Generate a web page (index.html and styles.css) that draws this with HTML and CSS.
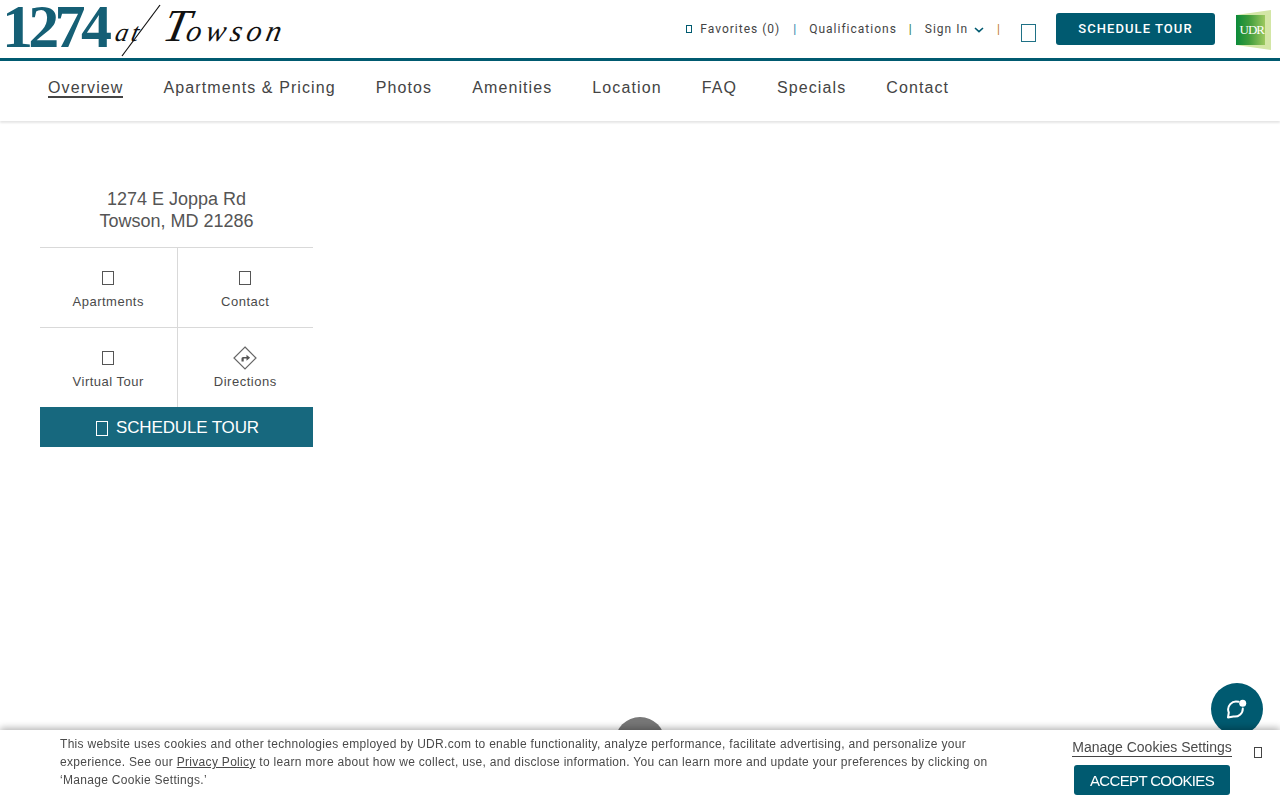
FILE: index.html
```html
<!DOCTYPE html>
<html lang="en">
<head>
<meta charset="utf-8">
<title>1274 at Towson</title>
<link rel="stylesheet" href="styles.css">
</head>
<body>
<header class="top">
  <a class="logo" href="#"><span class="logo-num">1274</span><span class="logo-script"><span class="logo-at">at</span> <span class="logo-t">T</span>owson</span>
    <svg class="logo-flourish" width="60" height="58" viewBox="0 0 60 58"><path d="M4 56 L42 5" fill="none" stroke="#111" stroke-width="1.2"/></svg>
  </a>
  <div class="util">
    <a class="util-link" href="#"><i class="tofu tofu-xs"></i>Favorites (0)</a>
    <span class="sep sep-a">|</span>
    <a class="util-link" href="#">Qualifications</a>
    <span class="sep sep-b">|</span>
    <a class="util-link" href="#">Sign In<svg class="chev" width="10" height="6" viewBox="0 0 10 6"><path d="M1 1l4 3.6L9 1" fill="none" stroke="#005a70" stroke-width="1.6"/></svg></a>
    <span class="sep sep-c">|</span>
    <i class="tofu tofu-lg"></i>
    <a class="tour-btn" href="#">SCHEDULE TOUR</a>
    <svg class="udr" width="36" height="40" viewBox="0 0 36 40">
      <defs><linearGradient id="g" x1="0" x2="1" y1="0" y2="0"><stop offset="0" stop-color="#0b8a3a"/><stop offset=".45" stop-color="#3f9c3c"/><stop offset="1" stop-color="#9cc85f"/></linearGradient></defs>
      <path d="M0 5 L35 0 V40 L0 35Z" fill="#d3e6a6"/>
      <path d="M0 5 L29 5 V35 L0 35Z" fill="url(#g)"/>
      <text x="3.5" y="24" class="udr-text">UDR</text>
    </svg>
  </div>
</header>
<nav class="nav">
  <a class="nav-item active" href="#">Overview</a>
  <a class="nav-item" href="#">Apartments &amp; Pricing</a>
  <a class="nav-item" href="#">Photos</a>
  <a class="nav-item" href="#">Amenities</a>
  <a class="nav-item" href="#">Location</a>
  <a class="nav-item" href="#">FAQ</a>
  <a class="nav-item" href="#">Specials</a>
  <a class="nav-item" href="#">Contact</a>
</nav>
<main class="main">
  <aside class="card">
    <address class="addr">1274 E Joppa Rd<br>Towson, MD 21286</address>
    <div class="grid">
      <a class="cell" href="#"><span class="cell-icon"><i class="tofu tofu-md"></i></span>Apartments</a>
      <a class="cell" href="#"><span class="cell-icon"><i class="tofu tofu-md"></i></span>Contact</a>
      <a class="cell" href="#"><span class="cell-icon"><i class="tofu tofu-md"></i></span>Virtual Tour</a>
      <a class="cell" href="#"><span class="cell-icon"><svg width="24" height="24" viewBox="0 0 24 24"><path d="M12 1 L23 12 L12 23 L1 12Z" fill="none" stroke="#666" stroke-width="1.2"/><path d="M8.5 15.5v-3a1.6 1.6 0 0 1 1.6-1.6h3.4V8.7l3.6 3-3.6 3v-2.1h-2.8v2.9z" fill="#555"/></svg></span>Directions</a>
    </div>
    <a class="cta" href="#"><i class="tofu tofu-cta"></i>SCHEDULE TOUR</a>
  </aside>
</main>
<div class="spinner"></div>
<a class="chat" href="#"><svg width="22" height="22" viewBox="0 0 22 22"><path d="M12.5 3.8A8 8 0 0 0 2.8 14.5L2 19.5l5.5-1A8 8 0 0 0 16.8 10.5" fill="none" stroke="#fff" stroke-width="2" stroke-linecap="round" stroke-linejoin="round"/><circle cx="16.7" cy="5.3" r="3.5" fill="#fff"/></svg></a>
<section class="cookie">
  <p class="cookie-text">This website uses cookies and other technologies employed by UDR.com to enable functionality, analyze performance, facilitate advertising, and personalize your experience. See our <a href="#">Privacy Policy</a> to learn more about how we collect, use, and disclose information. You can learn more and update your preferences by clicking on ‘Manage Cookie Settings.’</p>
  <div class="cookie-actions">
    <a class="manage" href="#">Manage Cookies Settings</a>
    <a class="accept" href="#">ACCEPT COOKIES</a>
  </div>
  <i class="tofu tofu-close"></i>
</section>
</body>
</html>
```

FILE: styles.css
```css
* { box-sizing: border-box; }
html, body { margin: 0; height: 100%; overflow: hidden; }
body { background: #fff; font-family: "Liberation Sans", Arial, sans-serif; color: #4a4a4a; }
a { color: inherit; text-decoration: none; }

.tofu { display: inline-block; border: 1px solid #555; flex: none; }
.tofu-xs { width: 6px; height: 8px; border-color: #005a70; margin-right: 8px; }
.tofu-lg { width: 15px; height: 18px; border-color: #1f7186; margin: 7px 0 0 20px; }
.tofu-md { width: 12px; height: 14px; }
.tofu-cta { width: 12px; height: 15px; border-color: #fff; margin-right: 8px; vertical-align: -3px; }
.tofu-close { width: 8px; height: 11px; border-color: #444; margin: 12px 0 0 22px; }

.top { height: 61px; border-bottom: 3px solid #005a70; display: flex; justify-content: space-between; align-items: flex-start; }
.logo { position: relative; display: flex; width: 300px; height: 58px; }
.logo-num { font: 700 62px/52px "Liberation Serif", serif; color: #155f75; letter-spacing: -4.7px; margin-left: 2px; }
.logo-script { font: italic 400 30px/1 "Liberation Serif", serif; color: #111; letter-spacing: 4.5px; margin: 14px 0 0 8px; white-space: nowrap; transform: skewX(-12deg); }
.logo-at { font-size: 26px; letter-spacing: 3px; }
.logo-t { font-size: 46px; line-height: 24px; letter-spacing: -2px; margin-left: 9px; }
.logo-flourish { position: absolute; left: 118px; top: 0; }

.util { display: flex; align-items: center; height: 58px; font-family: Roboto, sans-serif; font-size: 12px; letter-spacing: 1px; color: #444; }
.util-link { display: flex; align-items: center; }
.chev { margin-left: 6px; margin-top: 1px; }
.sep { margin: 0 12px; font-size: 12px; }
.sep-a { color: #2a7ea8; margin-left: 13px; }
.sep-b { color: #2a7a3a; }
.sep-c { color: #c0772a; margin: 0 0 0 13px; }
.tour-btn { width: 159px; height: 32px; margin: -1px 0 0 20px; background: #005a70; color: #fff; border-radius: 3px; display: flex; align-items: center; justify-content: center; font-size: 13px; font-weight: 500; letter-spacing: 1.05px; }
.udr { margin: 1px 8px 0 21px; }
.udr-text { font: 400 13px "Liberation Serif", serif; fill: #fff; letter-spacing: -1px; }

.nav { height: 60px; padding-left: 48px; display: flex; gap: 40px; align-items: center; box-shadow: 0 2px 2px rgba(0,0,0,.1); font-size: 16px; letter-spacing: 1.1px; color: #444; }
.nav-item { display: block; padding-top: 1px; line-height: 17px; border-bottom: 2px solid transparent; margin-bottom: 7px; }
.nav-item.active { border-bottom-color: #444; }

.main { padding: 67px 0 0 40px; }
.card { width: 273px; }
.addr { font: 400 18px/22px "Liberation Sans", sans-serif; color: #555; text-align: center; padding-bottom: 15px; }
.grid { display: grid; grid-template-columns: 137.5px 1fr; border-top: 1px solid #d9d9d9; }
.cell { height: 80px; display: flex; flex-direction: column; align-items: center; font-size: 13px; line-height: 20px; letter-spacing: .5px; color: #4a4a4a; padding-top: 18px; }
.cell:nth-child(odd) { border-right: 1px solid #d9d9d9; }
.cell:nth-child(-n+2) { border-bottom: 1px solid #d9d9d9; }
.cell:nth-child(n+3) { height: 79px; }
.cell-icon { height: 24px; display: flex; align-items: center; justify-content: center; margin-bottom: 2px; }
.cta { height: 40px; padding-left: 2px; background: #17687e; color: #fff; display: block; text-align: center; font-size: 17px; line-height: 42px; letter-spacing: -.15px; }

.spinner { position: fixed; left: 615px; top: 717px; width: 50px; height: 50px; border-radius: 50%; background: #777; }
.chat { position: fixed; left: 1211px; top: 683px; width: 52px; height: 52px; border-radius: 50%; background: #005a70; display: flex; align-items: center; justify-content: center; }

.cookie { position: fixed; left: 0; right: 0; top: 730px; height: 70px; background: #fff; box-shadow: 0 -2px 7px rgba(0,0,0,.3); display: flex; align-items: flex-start; padding: 5px 0 0 60px; }
.cookie-text { margin: 0; width: 950px; font-size: 12px; line-height: 18px; letter-spacing: .3px; color: #4a4a4a; }
.cookie-text a { text-decoration: underline; }
.cookie-actions { margin-left: 62px; width: 160px; display: flex; flex-direction: column; align-items: center; }
.manage { font-size: 14px; line-height: 17px; color: #4a4a4a; border-bottom: 1px solid #444; margin-top: 4px; }
.accept { margin-top: 8px; width: 156px; height: 30px; background: #005a70; color: #fff; border-radius: 3px; display: flex; align-items: center; justify-content: center; font-size: 15px; letter-spacing: -.65px; }
```
